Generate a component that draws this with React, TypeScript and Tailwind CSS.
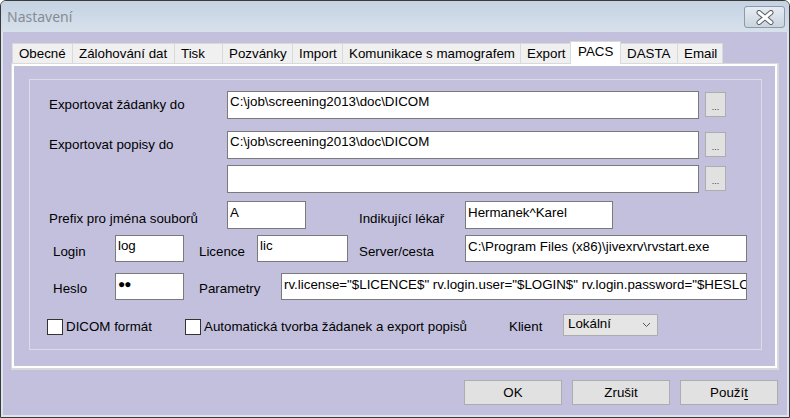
import React from "react";

const tabs = [
  { label: "Obecné", cls: "w-[61px]" },
  { label: "Zálohování dat", cls: "w-[103px]" },
  { label: "Tisk", cls: "w-[49px]" },
  { label: "Pozvánky", cls: "w-[71px]" },
  { label: "Import", cls: "w-[51px]" },
  { label: "Komunikace s mamografem", cls: "w-[179px]" },
  { label: "Export", cls: "w-[51px]" },
  { label: "PACS", cls: "w-[51px]", sel: true },
  { label: "DASTA", cls: "w-[58px]" },
  { label: "Email", cls: "w-[46px]" },
];

function Field({ className, children }: { className: string; children?: React.ReactNode }) {
  return (
    <div
      className={
        "bg-white border border-[#7a7a7a] pl-[2px] leading-[16px] overflow-hidden whitespace-nowrap text-black " +
        className
      }
    >
      {children}
    </div>
  );
}

function Dots({ className }: { className: string }) {
  return (
    <div
      className={
        "w-[21px] h-[25px] bg-[#e1e1e1] border border-[#adadad] flex items-end justify-center pb-[4px] text-[9px] leading-none text-[#333] " +
        className
      }
    >
      ...
    </div>
  );
}

function Btn({ children }: { children: React.ReactNode }) {
  return (
    <div className="w-[98px] h-[25px] bg-[#e1e1e1] border border-[#adadad] flex items-center justify-center text-[13.33px] text-black">
      {children}
    </div>
  );
}

export default function App() {
  return (
    <div className="w-[790px] h-[418px] bg-[#dce4ee] border border-[#3a3a3a] rounded-t-[6px] flex flex-col overflow-hidden font-['Liberation_Sans',Arial,sans-serif] text-[13.33px] text-black">
      {/* Title bar */}
      <div className="h-[31px] flex items-start bg-gradient-to-b from-[#c4d2e2] to-[#d7e1ec] shrink-0">
        <div className="pl-[6px] pt-[6px] text-[14px] leading-[20px] text-[#868c93] font-['Noto_Sans',sans-serif]">
          Nastavení
        </div>
        <div className="ml-auto mr-[4px] mt-[5px] w-[41px] h-[22px] rounded-[3px] border border-[#8d99a8] bg-gradient-to-b from-[#e6ecf3] to-[#c9d4e0] flex items-center justify-center">
          <svg width="20" height="15" viewBox="0 0 20 15">
            <path d="M4 2.5 L16 12.5 M16 2.5 L4 12.5" stroke="#5a5f66" strokeWidth="5" strokeLinecap="round" />
            <path d="M4 2.5 L16 12.5 M16 2.5 L4 12.5" stroke="#ffffff" strokeWidth="3" strokeLinecap="round" />
          </svg>
        </div>
      </div>

      {/* Client */}
      <div className="flex-1 mx-[2px] mb-[2px] bg-[#c3c0de] flex flex-col">
        <div className="ml-[8px] mt-[9px] w-[768px] flex flex-col">
          {/* Tab strip */}
          <div className="flex items-end h-[22px] pl-[1px]">
            {tabs.map((t, i) =>
              t.sel ? (
                <div
                  key={i}
                  className={
                    "relative z-10 -mb-[1px] -ml-px h-[23px] bg-white border border-b-0 border-[#d9d9d9] pl-[7px] pb-[3px] flex items-center whitespace-nowrap " +
                    t.cls
                  }
                >
                  {t.label}
                </div>
              ) : (
                <div
                  key={i}
                  className={
                    "h-[20px] bg-[#f0f0f0] border border-b-0 border-[#d9d9d9] pl-[6px] flex items-center whitespace-nowrap " +
                    (i === 0 ? "" : "-ml-px ") +
                    t.cls
                  }
                >
                  {t.label}
                </div>
              )
            )}
          </div>
          {/* Tab page */}
          <div className="h-[307px] border border-[#d9d9d9] border-r-[2px] border-b-[2px]">
            <div className="h-full border-2 border-white pt-[13px] pl-[15px]">
              <div className="w-[733px] h-[271px] border border-[#dcdbe9] pl-[19px] flex flex-col">
                {/* Row 1 */}
                <div className="flex items-center h-[28px] mt-[11px]">
                  <div className="w-[178px] leading-[16px]">Exportovat žádanky do</div>
                  <Field className="w-[472px] h-[28px] pt-[2px]">{"C:\\job\\screening2013\\doc\\DICOM"}</Field>
                  <Dots className="ml-[6px] self-start mt-[1px]" />
                </div>
                {/* Row 2 */}
                <div className="flex items-center h-[28px] mt-[12px]">
                  <div className="w-[178px] leading-[16px]">Exportovat popisy do</div>
                  <Field className="w-[472px] h-[28px] pt-[2px]">{"C:\\job\\screening2013\\doc\\DICOM"}</Field>
                  <Dots className="ml-[6px] self-start mt-[1px]" />
                </div>
                {/* Row 3 */}
                <div className="flex items-center h-[28px] mt-[6px]">
                  <div className="w-[178px]" />
                  <Field className="w-[472px] h-[28px] pt-[2px]" />
                  <Dots className="ml-[6px] self-start mt-[1px]" />
                </div>
                {/* Row 4 */}
                <div className="flex items-start h-[28px] mt-[8px]">
                  <div className="w-[178px] pt-[10px] leading-[16px]">Prefix pro jména souborů</div>
                  <Field className="w-[79px] h-[28px] pt-[3px]">A</Field>
                  <div className="ml-[53px] w-[106px] pt-[10px] leading-[16px]">Indikující lékař</div>
                  <Field className="w-[148px] h-[28px] pt-[3px]">Hermanek^Karel</Field>
                </div>
                {/* Row 5 */}
                <div className="flex items-start h-[27px] mt-[6px] ml-[4px]">
                  <div className="w-[62px] pt-[9px] leading-[16px]">Login</div>
                  <Field className="w-[69px] h-[27px] pt-[2px]">log</Field>
                  <div className="ml-[15px] w-[58px] pt-[9px] leading-[16px]">Licence</div>
                  <Field className="w-[91px] h-[27px] pt-[2px]">lic</Field>
                  <div className="ml-[11px] w-[106px] pt-[9px] leading-[16px]">Server/cesta</div>
                  <Field className="w-[282px] h-[27px] pt-[3px]">{"C:\\Program Files (x86)\\jivexrv\\rvstart.exe"}</Field>
                </div>
                {/* Row 6 */}
                <div className="flex items-start h-[27px] mt-[11px] ml-[4px]">
                  <div className="w-[62px] pt-[8px] leading-[16px]">Heslo</div>
                  <Field className="w-[69px] h-[27px] pt-[2px] text-[12px] tracking-[-1px]">●●</Field>
                  <div className="ml-[15px] w-[82px] pt-[8px] leading-[16px]">Parametry</div>
                  <Field className="w-[466px] h-[27px] pt-[3px]">
                    {'rv.license="$LICENCE$" rv.login.user="$LOGIN$" rv.login.password="$HESLO$"'}
                  </Field>
                </div>
                {/* Row 7 */}
                <div className="flex items-start h-[22px] mt-[14px] -ml-[2px]">
                  <div className="mt-[5px] w-[16px] h-[16px] border border-[#333] bg-white" />
                  <div className="ml-[3px] w-[119px] pt-[5px] leading-[16px]">DICOM formát</div>
                  <div className="mt-[5px] w-[16px] h-[16px] border border-[#333] bg-white" />
                  <div className="ml-[3px] w-[305px] pt-[5px] leading-[16px] whitespace-nowrap">
                    Automatická tvorba žádanek a export popisů
                  </div>
                  <div className="w-[54px] pt-[5px] leading-[16px]">Klient</div>
                  <div className="w-[95px] h-[22px] bg-[#e5e5e5] border border-[#acacac] flex items-center pl-[4px] pr-[6px]">
                    <span className="leading-[16px] -mt-[2px]">Lokální</span>
                    <svg className="ml-auto" width="9" height="6" viewBox="0 0 9 6">
                      <path d="M1 1 L4.5 4.5 L8 1" fill="none" stroke="#555" strokeWidth="1" />
                    </svg>
                  </div>
                </div>
              </div>
            </div>
          </div>
        </div>
        {/* Buttons */}
        <div className="flex justify-end gap-[10px] mt-[10px] pr-[9px]">
          <Btn>OK</Btn>
          <Btn>Zrušit</Btn>
          <Btn>
            Použí<span className="underline underline-offset-2">t</span>
          </Btn>
        </div>
      </div>
    </div>
  );
}
